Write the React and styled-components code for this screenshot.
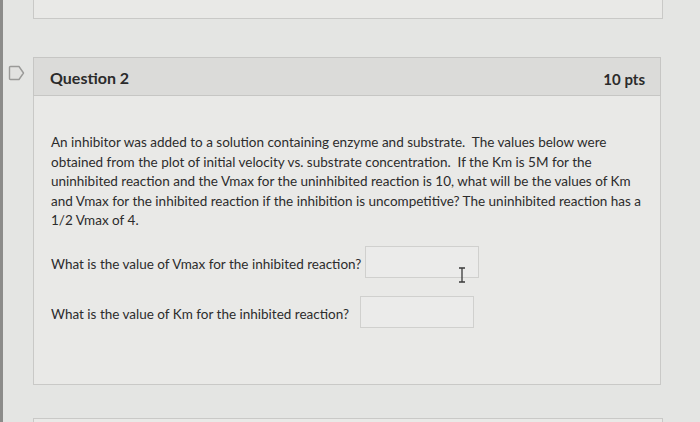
import React from "react";
import styled, { createGlobalStyle } from "styled-components";

const Global = createGlobalStyle`
  html, body { margin: 0; padding: 0; }
  body {
    background: #e4e5e3;
    font-family: Lato, "Open Sans", "Liberation Sans", sans-serif;
    color: #2f2f2f;
    width: 700px;
    height: 422px;
    overflow: hidden;
  }
`;

const Page = styled.div`
  height: 422px;
  box-sizing: border-box;
  border-left: 3px solid #8c8c8a;
  display: flex;
  flex-direction: column;
  padding-left: 30px;
  & > * { flex-shrink: 0; }
`;

const PrevCard = styled.div`
  width: 630px;
  height: 19px;
  box-sizing: border-box;
  border: 1px solid #c9c9c7;
  border-top: none;
  background: #e9e9e7;
`;

const QuestionRow = styled.div`
  margin-top: 38px;
  position: relative;
`;

const Flag = styled.svg`
  position: absolute;
  left: -25px;
  top: 8px;
`;

const Card = styled.div`
  width: 628px;
  display: flex;
  flex-direction: column;
`;

const Header = styled.div`
  height: 39px;
  box-sizing: border-box;
  background: #dbdbd9;
  border: 1px solid #c6c6c4;
  display: flex;
  align-items: center;
  justify-content: space-between;
  padding: 0 15px 0 16px;
`;

const Title = styled.div`
  font-size: 16px;
  font-weight: 700;
  color: #2b2b2b;
  margin-top: 1px;
`;

const Points = styled.div`
  font-size: 15px;
  font-weight: 700;
  color: #2b2b2b;
  margin-top: 5px;
`;

const Body = styled.div`
  height: 289px;
  box-sizing: border-box;
  background: #e9e9e7;
  border: 1px solid #c9c9c7;
  border-top: none;
  padding: 37px 17px 0 17px;
`;

const Text = styled.p`
  margin: 0;
  width: 596px;
  font-size: 13.5px;
  line-height: 19.5px;
  color: #2c2c2c;
`;

const Ask = styled.div`
  display: flex;
  align-items: center;
  margin-top: ${(p) => p.$top}px;
  font-size: 13.5px;
  color: #2c2c2c;
`;

const Label = styled.span`
  padding-top: 5px;
`;

const Input = styled.div`
  width: 114px;
  height: 32px;
  box-sizing: border-box;
  border: 1px solid #d0d0ce;
  background: #ebebea;
  margin-left: ${(p) => p.$gap}px;
  position: relative;
`;

const Cursor = styled.svg`
  position: absolute;
  left: 91px;
  top: 20px;
`;

const NextCard = styled.div`
  margin-top: 33px;
  width: 628px;
  height: 10px;
  border: 1px solid #c9c9c7;
  border-bottom: none;
  background: #e9e9e7;
`;

export default function App() {
  return (
    <>
      <Global />
      <Page>
        <PrevCard />
        <QuestionRow>
          <Flag width="17" height="16" viewBox="0 0 17 16">
            <path
              d="M2.5 1.5 H11 L15.5 8 L11 14.5 H2.5 Q1.5 14.5 1.5 13.5 V2.5 Q1.5 1.5 2.5 1.5 Z"
              fill="#e2e2e0"
              stroke="#9a9a98"
              strokeWidth="1.4"
              strokeLinejoin="round"
            />
          </Flag>
          <Card>
            <Header>
              <Title>Question 2</Title>
              <Points>10 pts</Points>
            </Header>
            <Body>
              <Text>
                An inhibitor was added to a solution containing enzyme and substrate.&nbsp; The values below were
                obtained from the plot of initial velocity vs. substrate concentration.&nbsp; If the Km is 5M for the
                uninhibited reaction and the Vmax for the uninhibited reaction is 10, what will be the values of Km
                and Vmax for the inhibited reaction if the inhibition is uncompetitive? The uninhibited reaction has a
                1/2 Vmax of 4.
              </Text>
              <Ask $top={15}>
                <Label>What is the value of Vmax for the inhibited reaction?</Label>
                <Input $gap={4}>
                  <Cursor width="10" height="16" viewBox="0 0 10 16">
                    <path d="M2 1 H8 M5 1 V15 M2 15 H8" stroke="#3a3a3a" strokeWidth="1.3" fill="none" />
                  </Cursor>
                </Input>
              </Ask>
              <Ask $top={18}>
                <Label>What is the value of Km for the inhibited reaction?</Label>
                <Input $gap={11} />
              </Ask>
            </Body>
          </Card>
          <NextCard />
        </QuestionRow>
      </Page>
    </>
  );
}
